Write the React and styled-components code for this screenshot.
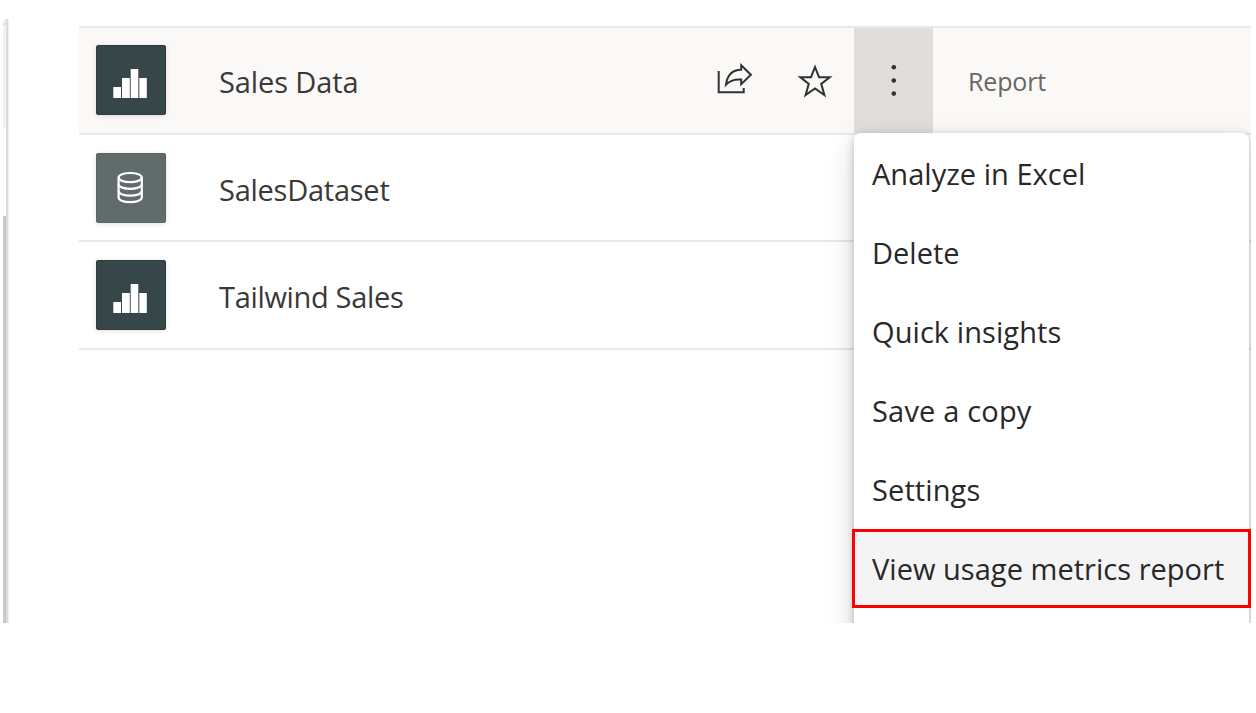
import React from "react";
import styled, { createGlobalStyle } from "styled-components";

const Global = createGlobalStyle`
  *, *::before, *::after { box-sizing: border-box; }
  html, body { margin: 0; background: #fff; }
  body { font-family: "Open Sans", "Noto Sans", sans-serif; font-weight: 400; color: #3a3938; }
`;

const Page = styled.div`
  width: 1256px;
  height: 713px;
  padding: 19px 5px 90px 3px;
  overflow: hidden;
  background: #fff;
`;

const Viewport = styled.div`
  position: relative;
  display: flex;
  width: 1248px;
  height: 604px;
  overflow: hidden;
`;

const ScrollRail = styled.div`
  display: flex;
  flex-direction: column;
  justify-content: space-between;
  width: 3px;
  flex: none;
`;

const RailTop = styled.div`
  height: 109px;
  background: #f3f2f1;
  padding-top: 4px;
  &::before {
    content: "";
    display: block;
    height: 2px;
    background: #e3e2e0;
  }
`;

const RailThumb = styled.div`
  height: 407px;
  background: #c8c8c8;
`;

const Divider = styled.div`
  width: 3px;
  flex: none;
  background: #dcdbd8;
  border-right: 1px solid #f3f1ee;
`;

const List = styled.div`
  flex: 1;
  margin: 7px 0 0 70px;
`;

const Row = styled.div`
  display: flex;
  align-items: flex-start;
  height: 107px;
  padding: ${(p) => (p.$active ? 17 : 18)}px 0 0 17px;
  border-top: 2px solid #e8e8e7;
  background: ${(p) => (p.$active ? "#faf9f8" : "#fff")};
  &:last-child {
    height: 110px;
    border-bottom: 2px solid #e8e8e7;
  }
`;

const Tile = styled.div`
  width: 70px;
  height: 70px;
  border-radius: 3px;
  flex: none;
  background: ${(p) => (p.$muted ? "#606b6c" : "#374649")};
  box-shadow: inset 0 0 0 1px ${(p) => (p.$muted ? "#586465" : "#2c3c3f")}, 0 1px 5px rgba(0, 0, 0, 0.12);
  svg { display: block; }
`;

const Name = styled.span`
  width: 480px;
  margin: 17px 0 0 53px;
  font-size: 29px;
  line-height: 40px;
  white-space: nowrap;
  letter-spacing: ${(p) => p.$track}px;
`;

const Actions = styled.div`
  display: flex;
  margin-top: -17px;
`;

const IconButton = styled.span`
  display: block;
  width: ${(p) => p.$w}px;
  height: 105px;
  background: ${(p) => (p.$pressed ? "#dfdedd" : "transparent")};
  svg { display: block; }
`;

const Kind = styled.span`
  margin: 16px 0 0 35px;
  font-size: 25px;
  line-height: 40px;
  color: #686664;
  letter-spacing: -0.15px;
`;

const Menu = styled.div`
  position: absolute;
  left: 851px;
  top: 114px;
  width: 395px;
  height: 560px;
  padding-top: 1px;
  border-radius: 7px;
  background: #fff;
  box-shadow: 0 3px 8px rgba(0, 0, 0, 0.22), 0 10px 28px rgba(0, 0, 0, 0.16);
`;

const MenuItem = styled.div`
  display: flex;
  align-items: center;
  height: 79px;
  padding: 0 0 1px 18px;
  font-size: 29px;
  color: #282828;
  white-space: nowrap;
  letter-spacing: ${(p) => p.$track}px;
  ${(p) =>
    p.$selected &&
    `
    margin: 0 -2px;
    padding-left: 17px;
    border: 3px solid #ff0000;
    background: #f4f4f4;
  `}
`;

const ReportIcon = () => (
  <svg width="70" height="70" viewBox="0 0 70 70" fill="#fff">
    <rect x="17.3" y="42" width="7.7" height="11" />
    <rect x="26" y="33" width="7.8" height="20" />
    <rect x="34.7" y="24" width="7.6" height="29" />
    <rect x="43.3" y="33" width="7.5" height="20" />
  </svg>
);

const DatasetIcon = () => (
  <svg width="70" height="70" viewBox="0 0 70 70" fill="none" stroke="#fff" strokeWidth="2.2">
    <ellipse cx="34.2" cy="24.6" rx="11.6" ry="4.6" />
    <path d="M22.6 24.6V44.5C22.6 50.6 45.8 50.6 45.8 44.5V24.6" />
    <path d="M22.6 31.2C22.6 37.3 45.8 37.3 45.8 31.2M22.6 38C22.6 44.1 45.8 44.1 45.8 38" />
  </svg>
);

const ShareIcon = () => (
  <svg width="77" height="105" viewBox="699.3 28 77 105" fill="none" stroke="#323130" strokeWidth="2">
    <path d="M719 71V92.3H744V88" />
    <path d="M741.5 65.3L751.2 74.8L741.5 84.2V79.5C734.5 79 730 80.5 726.3 84.7C727.5 75.5 732.7 70 741.5 69.8Z" />
  </svg>
);

const StarIcon = () => (
  <svg width="77" height="105" viewBox="777 28 77 105" fill="none" stroke="#323130" strokeWidth="2">
    <path d="M815 67L819 77.2H829.7L821.2 83.9L824.4 95L815 88.4L805.6 95L808.8 83.9L800.3 77.2H811Z" />
  </svg>
);

const MoreIcon = () => (
  <svg width="79" height="105" viewBox="854 28 79 105" fill="#323130">
    <circle cx="893.8" cy="67.3" r="2.3" />
    <circle cx="893.8" cy="80.5" r="2.3" />
    <circle cx="893.8" cy="93.6" r="2.3" />
  </svg>
);

const menuItems = [
  { label: "Analyze in Excel", track: 0.03 },
  { label: "Delete", track: 0 },
  { label: "Quick insights", track: 0.08 },
  { label: "Save a copy", track: 0.18 },
  { label: "Settings", track: 0.1 },
  { label: "View usage metrics report", track: 0.03, selected: true },
];

export default function App() {
  return (
    <Page>
      <Global />
      <Viewport>
        <ScrollRail>
          <RailTop />
          <RailThumb />
        </ScrollRail>
        <Divider />
        <List>
          <Row $active>
            <Tile><ReportIcon /></Tile>
            <Name $track={-0.12}>Sales Data</Name>
            <Actions>
              <IconButton $w={78}><ShareIcon /></IconButton>
              <IconButton $w={77}><StarIcon /></IconButton>
              <IconButton $w={79} $pressed><MoreIcon /></IconButton>
            </Actions>
            <Kind>Report</Kind>
          </Row>
          <Row>
            <Tile $muted><DatasetIcon /></Tile>
            <Name $track={-0.25}>SalesDataset</Name>
          </Row>
          <Row>
            <Tile><ReportIcon /></Tile>
            <Name $track={-0.33}>Tailwind Sales</Name>
          </Row>
        </List>
        <Menu>
          {menuItems.map((item) => (
            <MenuItem key={item.label} $track={item.track} $selected={item.selected}>
              <span>{item.label}</span>
            </MenuItem>
          ))}
        </Menu>
      </Viewport>
    </Page>
  );
}
